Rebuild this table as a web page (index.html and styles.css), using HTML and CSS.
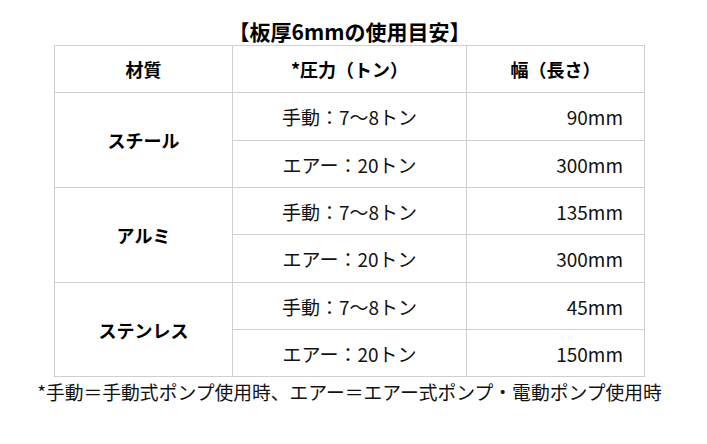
FILE: index.html
```html
<!DOCTYPE html>
<html lang="ja">
<head>
<meta charset="utf-8">
<link rel="stylesheet" href="styles.css">
</head>
<body>
<div class="page">
  <h1 class="title">【板厚6mmの使用目安】</h1>
  <table class="spec">
    <thead>
      <tr>
        <th class="c1">材質</th>
        <th class="c2">*圧力（トン）</th>
        <th class="c3">幅（長さ）</th>
      </tr>
    </thead>
    <tbody>
      <tr class="tall">
        <td class="mat" rowspan="2">スチール</td>
        <td class="press">手動：7～8トン</td>
        <td class="width">90mm</td>
      </tr>
      <tr>
        <td class="press">エアー：20トン</td>
        <td class="width">300mm</td>
      </tr>
      <tr>
        <td class="mat" rowspan="2">アルミ</td>
        <td class="press">手動：7～8トン</td>
        <td class="width">135mm</td>
      </tr>
      <tr class="tall">
        <td class="press">エアー：20トン</td>
        <td class="width">300mm</td>
      </tr>
      <tr>
        <td class="mat" rowspan="2">ステンレス</td>
        <td class="press">手動：7～8トン</td>
        <td class="width">45mm</td>
      </tr>
      <tr>
        <td class="press">エアー：20トン</td>
        <td class="width">150mm</td>
      </tr>
    </tbody>
  </table>
  <p class="note">*手動＝手動式ポンプ使用時、エアー＝エアー式ポンプ・電動ポンプ使用時</p>
</div>
</body>
</html>
```
FILE: styles.css
```css
html, body {
  background: #ffffff;
}
body {
  margin: 0 8px 0 0;
  font-family: "Noto Sans CJK JP", "Noto Sans", sans-serif;
  color: #111111;
}
.page {
  display: flex;
  flex-direction: column;
  align-items: center;
  padding-top: 19px;
}
.title {
  margin: 0 0 2px 0;
  font-size: 21px;
  line-height: 24px;
  font-weight: 700;
  color: #000000;
}
.spec {
  border-collapse: collapse;
  width: 587px;
  table-layout: fixed;
}
.spec th,
.spec td {
  border: 1px solid #cfcfcf;
  height: 46px;
  padding: 0;
  vertical-align: middle;
}
.spec .tall td {
  height: 47px;
}
.spec th {
  font-size: 18px;
  font-weight: 700;
  text-align: center;
  color: #000000;
}
.c1 { width: 177px; }
.c2 { width: 233px; }
.c3 { width: 177px; }
.mat {
  font-size: 18px;
  font-weight: 700;
  text-align: center;
  color: #000000;
}
.press {
  font-size: 19px;
  text-align: center;
}
.spec .width {
  font-size: 19px;
  text-align: right;
  padding-right: 21px;
}
.note {
  margin: 3px 0 0 0;
  font-size: 18.8px;
  line-height: 24px;
  white-space: nowrap;
}
```
